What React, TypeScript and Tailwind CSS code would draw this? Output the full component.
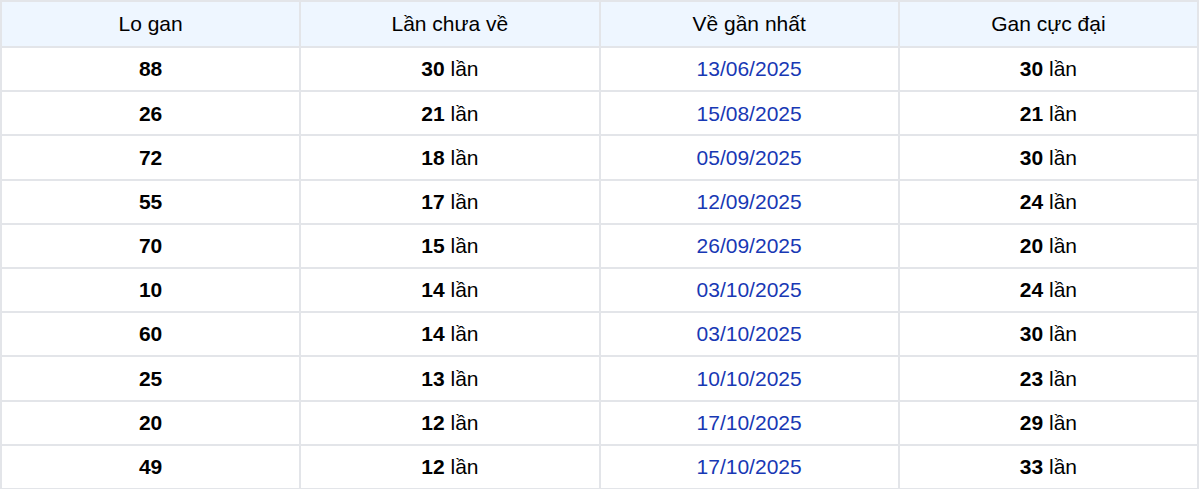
import React from 'react';

interface GanRow {
  lo: string;
  chuaVe: number;
  ganNhat: string;
  cucDai: number;
}

const rows: GanRow[] = [
  { lo: '88', chuaVe: 30, ganNhat: '13/06/2025', cucDai: 30 },
  { lo: '26', chuaVe: 21, ganNhat: '15/08/2025', cucDai: 21 },
  { lo: '72', chuaVe: 18, ganNhat: '05/09/2025', cucDai: 30 },
  { lo: '55', chuaVe: 17, ganNhat: '12/09/2025', cucDai: 24 },
  { lo: '70', chuaVe: 15, ganNhat: '26/09/2025', cucDai: 20 },
  { lo: '10', chuaVe: 14, ganNhat: '03/10/2025', cucDai: 24 },
  { lo: '60', chuaVe: 14, ganNhat: '03/10/2025', cucDai: 30 },
  { lo: '25', chuaVe: 13, ganNhat: '10/10/2025', cucDai: 23 },
  { lo: '20', chuaVe: 12, ganNhat: '17/10/2025', cucDai: 29 },
  { lo: '49', chuaVe: 12, ganNhat: '17/10/2025', cucDai: 33 },
];

const headers = ['Lo gan', 'Lần chưa về', 'Về gần nhất', 'Gan cực đại'];

const App: React.FC = () => {
  return (
    <div className="w-[1200px] bg-white font-['Liberation_Sans',Arial,sans-serif] text-[21px] text-black">
      <table className="w-[1199px] table-fixed border-collapse">
        <thead>
          <tr className="bg-[#eef6ff]">
            {headers.map((h) => (
              <th key={h} className="h-[46px] border-2 border-[#e3e5e9] p-0 text-center font-normal">
                {h}
              </th>
            ))}
          </tr>
        </thead>
        <tbody>
          {rows.map((r) => (
            <tr key={r.lo}>
              <td className="h-[44.2px] border-2 border-[#e3e5e9] p-0 text-center font-bold">{r.lo}</td>
              <td className="h-[44.2px] border-2 border-[#e3e5e9] p-0 text-center">
                <b>{r.chuaVe}</b> lần
              </td>
              <td className="h-[44.2px] border-2 border-[#e3e5e9] p-0 text-center text-[#1838b4]">{r.ganNhat}</td>
              <td className="h-[44.2px] border-2 border-[#e3e5e9] p-0 text-center">
                <b>{r.cucDai}</b> lần
              </td>
            </tr>
          ))}
        </tbody>
      </table>
    </div>
  );
};

export default App;
